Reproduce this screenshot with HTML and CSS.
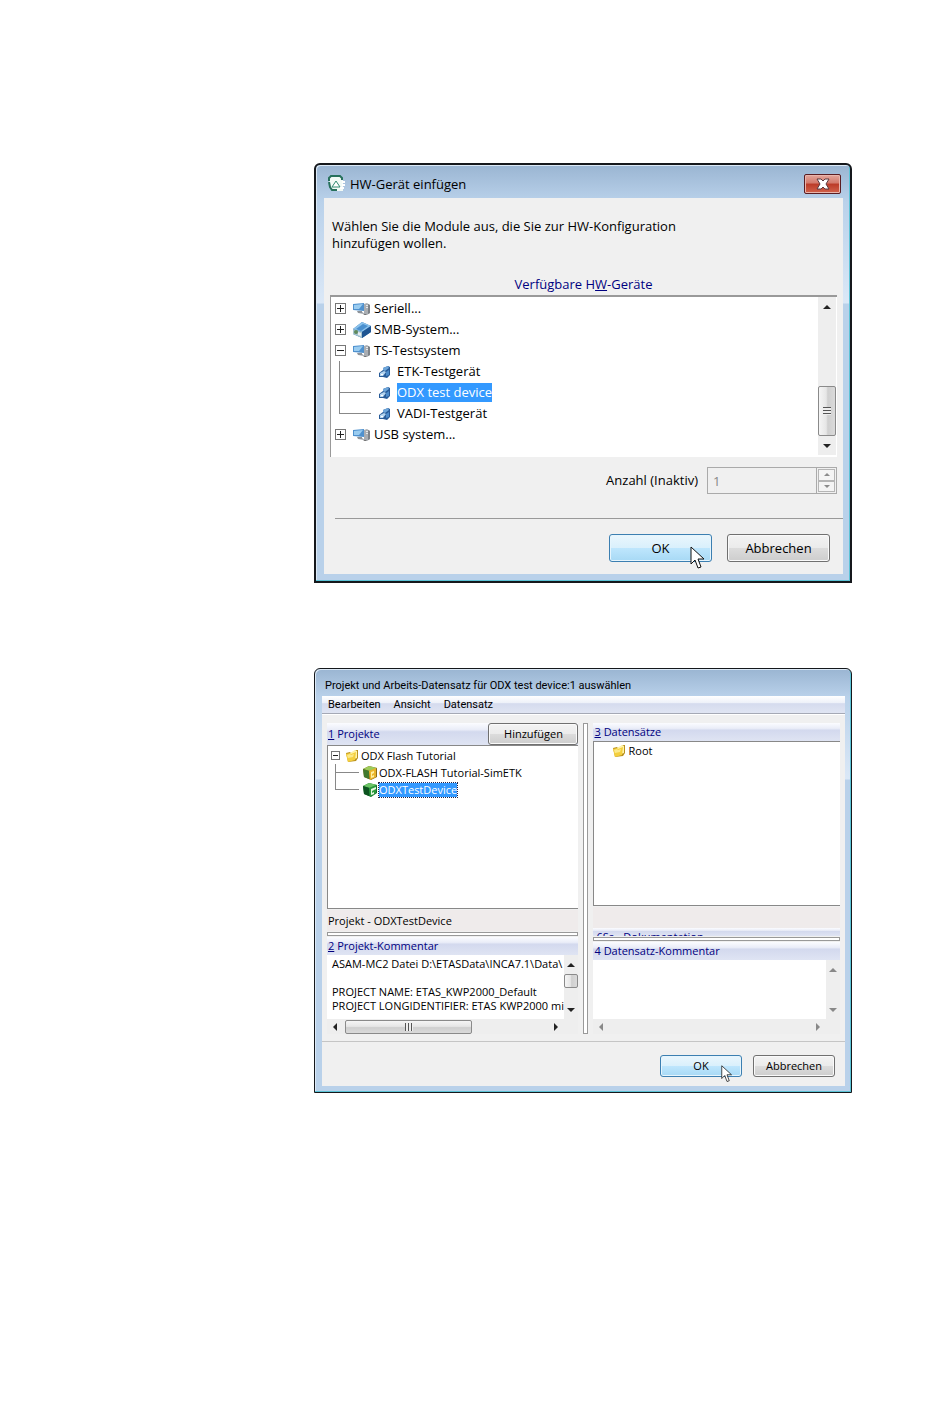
FILE: index.html
```html
<!DOCTYPE html>
<html lang="de">
<head>
  <meta charset="UTF-8">
  <meta name="viewport" content="width=device-width, initial-scale=1.0">
  <title>HW-Gerät einfügen</title>
  <link rel="stylesheet" href="styles.css">
</head>
<body>
  <!-- shared icons -->
  <svg class="sprite" aria-hidden="true">
    <symbol id="pc" viewBox="0 0 20 18">
      <path d="M12 4l3-1 3 2v8l-3 2-3-1z" fill="#a9adb2"/>
      <path d="M16 4l2 1v8l-2 1z" fill="#7d8288"/>
      <path d="M14 5h2v1h-2zM14 7h2v1h-2z" fill="#e4e7ea"/>
      <path d="M1 4l11-1v8L1 10z" fill="#4f91ce"/>
      <path d="M2 5l9-1-4 5-5 0z" fill="#9accf0"/>
      <path d="M5 11h5v1l3 2-7-1z" fill="#8d939a"/>
      <path d="M11 14l4 0-2 1z" fill="#555"/>
    </symbol>
    <symbol id="smb" viewBox="0 0 20 18">
      <path d="M1 8L10 1l9 4v6l-9 6-9-4z" fill="#2e6fb0"/>
      <path d="M1 8L10 1l9 4-9 6z" fill="#8cc3ec"/>
      <path d="M4 8l7-5 5 2-7 5z" fill="#4a90cf"/>
      <path d="M1 8l9 3v6l-9-4z" fill="#a6c4cf"/>
      <path d="M10 11l9-6v6l-9 6z" fill="#1f5592"/>
      <circle cx="4" cy="11" r="2" fill="#5f8a5c"/>
      <path d="M6 11l3 1v3l-3-1z" fill="#e8eef2"/>
    </symbol>
    <symbol id="device" viewBox="0 0 14 14">
      <path d="M1 8l4-3V3l5-2 2 1v8l-3 3-4-1H1z" fill="#285b98"/>
      <path d="M5 5V3l5-2 1 2-4 3z" fill="#6ea6da"/>
      <path d="M2 8l4-2 2 1-3 4H2z" fill="#b5d5f0"/>
      <path d="M8 7l3-2v5l-3 1z" fill="#4d8bc9"/>
      <path d="M3 9h2v1H3z" fill="#fff"/>
    </symbol>
    <symbol id="folder" viewBox="0 0 14 14">
      <path d="M1 4l4-1 1 1 5-3h2v8l-2 3-8 1z" fill="#b8901c"/>
      <path d="M5 4l5-3 2 1v7l-6 2z" fill="#fff3a8"/>
      <path d="M1 5l4-1 1 1 5-2-1 8-7 2z" fill="#f4cf3e"/>
      <path d="M2 6l3-1 1 1 3-1-1 3-5 1z" fill="#fbe98a"/>
    </symbol>
    <symbol id="box" viewBox="0 0 14 14">
      <path d="M0 3l6-3 8 2v9l-6 3-7-3z" fill="#8a6a18"/>
      <path d="M0 3l6-3 8 2-7 3z" fill="#9ccb5b"/>
      <path d="M0 3l6 2v8l-5-2z" fill="#41792d"/>
      <path d="M6 5l7-3v9l-6 3z" fill="#eab52a"/>
      <path d="M8 6l3-1v2l-2 1v2l2-1v2l-3 1z" fill="#fff0a0"/>
    </symbol>
    <symbol id="box-green" viewBox="0 0 14 14">
      <path d="M0 3l6-3 8 2v8l-6 4-7-3z" fill="#16702a"/>
      <path d="M0 3l6-3 8 2-7 3z" fill="#6cc465"/>
      <path d="M0 3l6 2v8l-5-2z" fill="#0d5320"/>
      <path d="M6 5l7-3v8l-6 4z" fill="#2b9a3d"/>
      <path d="M8 6l5-2v2L9 8v2l2-1v2l-3 1z" fill="#e6f7de"/>
    </symbol>
    <symbol id="cursor" viewBox="0 0 16 24">
      <path d="M1 1v17l4-4 3 8 3-1-3-8h6z" fill="#fff" stroke="#111"/>
    </symbol>
  </svg>

  <main class="page">
    <section class="dialog device-dialog" aria-labelledby="device-title">
      <header class="titlebar">
        <svg class="app-icon" viewBox="0 0 20 18" aria-hidden="true">
          <path d="M3 1h12l2 3v12H6L3 12z" fill="#f2faf6"/>
          <path d="M3 6V3l2-2h9l2 2v2M3 7l1 5 2 3h5" fill="none" stroke="#26705c" stroke-width="2"/>
          <path d="M10 6l4 6H6z" fill="#fff" stroke="#2f8a70"/>
          <path d="M16 7h3M16 10h3M14 13h4" stroke="#fff" stroke-width="2"/>
        </svg>
        <h1 id="device-title">HW-Gerät einfügen</h1>
        <button class="close" type="button" aria-label="Schließen">
          <svg viewBox="0 0 14 12" aria-hidden="true">
            <path d="M1 1h4l2 2 2-2h4L10 6l3 5H9L7 9l-2 2H1l3-5z" fill="#fff" stroke="#5b3a40"/>
          </svg>
        </button>
      </header>

      <div class="body">
        <p class="intro">Wählen Sie die Module aus, die Sie zur HW-Konfiguration<br>hinzufügen wollen.</p>
        <h2 class="list-title">Verfügbare H<u>W</u>-Geräte</h2>

        <div class="device-list">
          <ul class="tree">
            <li class="row"><span class="toggle plus"></span><svg class="icon"><use href="#pc"/></svg><span>Seriell...</span></li>
            <li class="row"><span class="toggle plus"></span><svg class="icon"><use href="#smb"/></svg><span>SMB-System...</span></li>
            <li class="row"><span class="toggle"></span><svg class="icon"><use href="#pc"/></svg><span>TS-Testsystem</span></li>
            <li>
              <ul class="children">
                <li class="row"><span class="branch"></span><svg class="icon"><use href="#device"/></svg><span>ETK-Testgerät</span></li>
                <li class="row"><span class="branch"></span><svg class="icon"><use href="#device"/></svg><span class="selected">ODX test device</span></li>
                <li class="row"><span class="branch"></span><svg class="icon"><use href="#device"/></svg><span>VADI-Testgerät</span></li>
              </ul>
            </li>
            <li class="row"><span class="toggle plus"></span><svg class="icon"><use href="#pc"/></svg><span>USB system...</span></li>
          </ul>
          <div class="scrollbar" aria-hidden="true">
            <span class="arrow up"></span>
            <span class="thumb"><i class="grip"></i></span>
            <span class="arrow down"></span>
          </div>
        </div>

        <div class="count">
          <label for="count">Anzahl (Inaktiv)</label>
          <input id="count" type="text" value="1" disabled>
          <div class="spinner">
            <button type="button" aria-label="Mehr" disabled><span class="arrow up"></span></button>
            <button type="button" aria-label="Weniger" disabled><span class="arrow down"></span></button>
          </div>
        </div>

        <footer class="actions">
          <div class="default-action">
            <button class="button primary" type="button">OK</button>
            <svg class="cursor" aria-hidden="true"><use href="#cursor"/></svg>
          </div>
          <button class="button" type="button">Abbrechen</button>
        </footer>
      </div>
    </section>

    <section class="dialog project-dialog" aria-labelledby="project-title">
      <header class="titlebar">
        <h1 id="project-title">Projekt und Arbeits-Datensatz für ODX test device:1 auswählen</h1>
      </header>

      <div class="body">
        <nav class="menu">
          <button type="button">Bearbeiten</button>
          <button type="button">Ansicht</button>
          <button type="button">Datensatz</button>
        </nav>

        <div class="panes">
          <div class="pane">
            <div class="pane-head with-button">
              <h2><u>1</u> Projekte</h2>
              <button class="button" type="button">Hinzufügen</button>
            </div>
            <ul class="tree projects">
              <li class="row"><span class="toggle"></span><svg class="icon"><use href="#folder"/></svg><span>ODX Flash Tutorial</span></li>
              <li>
                <ul class="children">
                  <li class="row"><span class="branch"></span><svg class="icon"><use href="#box"/></svg><span>ODX-FLASH Tutorial-SimETK</span></li>
                  <li class="row"><span class="branch"></span><svg class="icon"><use href="#box-green"/></svg><span class="selected">ODXTestDevice</span></li>
                </ul>
              </li>
            </ul>
            <p class="status">Projekt - ODXTestDevice</p>
            <div class="splitter"></div>
            <div class="pane-head"><label for="project-comment"><u>2</u> Projekt-Kommentar</label></div>
            <div class="comment">
              <textarea id="project-comment" wrap="off" readonly>ASAM-MC2 Datei D:\ETASData\INCA7.1\Data\

PROJECT NAME: ETAS_KWP2000_Default
PROJECT LONGIDENTIFIER: ETAS KWP2000 mi</textarea>
              <div class="scrollbar" aria-hidden="true">
                <span class="arrow up"></span>
                <span class="thumb"></span>
                <span class="arrow down"></span>
              </div>
              <div class="scrollbar horizontal" aria-hidden="true">
                <span class="arrow left"></span>
                <span class="thumb"><i class="grip"></i></span>
                <span class="arrow right"></span>
              </div>
            </div>
          </div>

          <div class="splitter vertical"></div>

          <div class="pane">
            <div class="pane-head"><h2><u>3</u> Datensätze</h2></div>
            <ul class="tree datasets">
              <li class="row"><svg class="icon"><use href="#folder"/></svg><span>Root</span></li>
            </ul>
            <p class="status"></p>
            <!-- pane pushed together by the splitter, only the top of its title shows -->
            <div class="pane-head collapsed"><h2>6Ss - Dokumentation</h2></div>
            <div class="splitter"></div>
            <div class="pane-head"><label for="dataset-comment">4 Datensatz-Kommentar</label></div>
            <div class="comment disabled">
              <textarea id="dataset-comment" readonly></textarea>
              <div class="scrollbar" aria-hidden="true">
                <span class="arrow up"></span>
                <span class="arrow down"></span>
              </div>
              <div class="scrollbar horizontal" aria-hidden="true">
                <span class="arrow left"></span>
                <span class="arrow right"></span>
              </div>
            </div>
          </div>
        </div>

        <footer class="actions">
          <div class="default-action">
            <button class="button primary" type="button">OK</button>
            <svg class="cursor" aria-hidden="true"><use href="#cursor"/></svg>
          </div>
          <button class="button" type="button">Abbrechen</button>
        </footer>
      </div>
    </section>
  </main>
</body>
</html>
```
FILE: styles.css
```css
:root {
  --frame: #b9d1ea;
  --face: #f0f0f0;
  --navy: #000080;
  --select: #3399ff;
}

* {
  margin: 0;
  padding: 0;
  box-sizing: border-box;
}

body {
  background: #fff;
  color: #000;
  font-family: "Open Sans", "Noto Sans", sans-serif;
  font-size: 13px;
  line-height: 17px;
}

h1,
h2 {
  font-size: inherit;
  font-weight: normal;
}

ul {
  list-style: none;
}

button,
input,
textarea {
  font: inherit;
  color: inherit;
}

.sprite {
  display: none;
}

.page {
  display: flex;
  flex-direction: column;
  gap: 85px;
  padding: 163px 98px 80px 314px;
}

/* window frame */
.dialog {
  border: 2px solid #15181c;
  border-radius: 6px 6px 0 0;
  padding: 0 7px 7px 8px;
  background: linear-gradient(#9ab5d2, var(--frame) 36px, #dbe8f7 138px, var(--frame) 139px);
  box-shadow: inset -1px -1px #5cc3d6, inset 1px 1px #dce9f6;
}

.titlebar {
  display: flex;
  align-items: center;
  height: 33px;
  padding-top: 5px;
}

.app-icon {
  width: 20px;
  height: 18px;
  margin: 0 4px 0 2px;
}

.close {
  display: flex;
  align-items: center;
  justify-content: center;
  width: 37px;
  height: 20px;
  margin: 0 2px 0 auto;
  border: 1px solid #5a1d22;
  border-radius: 2px;
  background: linear-gradient(#e3a69c, #d3796b 45%, #bb3b28 50%, #d2634c);
  box-shadow: inset 0 0 0 1px #e9b5ac;
}

.close svg {
  width: 14px;
  height: 12px;
}

.body {
  background: var(--face);
}

/* buttons */
.button {
  border: 1px solid #707070;
  border-radius: 3px;
  background: linear-gradient(#f3f3f3, #ebebeb 50%, #dcdcdc 51%, #cdcdcd);
  box-shadow: inset 0 0 0 1px #fafafa;
}

.button.primary {
  border-color: #3c7fb1;
  background: linear-gradient(#eaf6fd, #d9f0fc 50%, #bee6fd 51%, #a7d9f5);
  box-shadow: inset 0 0 0 1px #e6f5fd;
}

.actions {
  display: flex;
  justify-content: flex-end;
}

.actions .button {
  width: 103px;
  height: 28px;
}

.default-action {
  position: relative;
}

.cursor {
  position: absolute;
  top: 12px;
  left: 81px;
  width: 16px;
  height: 24px;
}

/* tree */
.tree {
  flex: 1;
  min-width: 0;
}

.row {
  display: flex;
  align-items: center;
  height: 21px;
  white-space: nowrap;
}

.toggle {
  flex: none;
  width: 11px;
  height: 11px;
  margin-right: 6px;
  border: 1px solid #777;
  background: linear-gradient(#222, #222) center / 7px 1px no-repeat #fff;
}

.toggle.plus {
  background: linear-gradient(#222, #222) center / 7px 1px no-repeat,
    linear-gradient(#222, #222) center / 1px 7px no-repeat #fff;
}

.icon {
  flex: none;
  width: 20px;
  height: 18px;
  margin-right: 2px;
}

.branch {
  flex: none;
  align-self: stretch;
  width: 32px;
  margin-right: 7px;
  background: linear-gradient(#888, #888) 0 50% / 100% 1px no-repeat,
    linear-gradient(#888, #888) 0 0 / 1px 100% no-repeat;
}

.row:last-child .branch {
  background-size: 100% 1px, 1px 50%;
}

.children {
  padding-left: 4px;
}

.children .icon {
  width: 14px;
  height: 14px;
  margin-right: 5px;
}

.selected {
  padding: 1px 0;
  background: var(--select);
  color: #fff;
}

/* scrollbars */
.scrollbar {
  display: flex;
  flex-direction: column;
  align-items: center;
  justify-content: space-between;
  flex: none;
  width: 18px;
  padding: 8px 0 7px;
  background: #eee;
}

.scrollbar.horizontal {
  flex-direction: row;
  width: auto;
  height: 15px;
  padding: 0 6px;
}

.arrow {
  flex: none;
  border: 4px solid transparent;
}

.arrow.up {
  border-top: 0;
  border-bottom-color: #222;
}

.arrow.down {
  border-bottom: 0;
  border-top-color: #222;
}

.arrow.left {
  border-left: 0;
  border-right-color: #222;
}

.arrow.right {
  border-right: 0;
  border-left-color: #222;
}

.thumb {
  display: flex;
  align-items: center;
  justify-content: center;
  width: 100%;
  border: 1px solid #8a8a8a;
  border-radius: 2px;
  background: linear-gradient(90deg, #f5f5f5, #e6e6e6 45%, #cfcfcf 55%, #dadada);
}

.grip {
  width: 8px;
  height: 8px;
  background: repeating-linear-gradient(#555 0 1px, #eee 1px 3px);
}

.horizontal .thumb {
  background: linear-gradient(#f5f5f5, #e6e6e6 45%, #cfcfcf 55%, #dadada);
}

.horizontal .grip {
  background: repeating-linear-gradient(90deg, #555 0 1px, #eee 1px 3px);
}

/* device dialog */
.device-dialog .body {
  padding: 20px 0 12px 6px;
}

.intro {
  padding-left: 2px;
}

.list-title {
  margin: 24px 6px 2px 0;
  color: var(--navy);
  text-align: center;
}

.device-list {
  display: flex;
  margin-right: 6px;
  border-top: 2px solid #999;
  border-left: 1px solid #999;
  background: #fff;
}

.device-list .tree {
  padding: 1px 0 12px 4px;
}

.device-list .scrollbar {
  margin: 0 1px 2px 0;
}

.device-list .thumb {
  height: 50px;
  margin: auto 0 8px;
}

.count {
  display: flex;
  align-items: center;
  justify-content: flex-end;
  margin: 10px 6px 24px 0;
}

.count input {
  width: 110px;
  height: 27px;
  margin-left: 9px;
  padding: 0 5px;
  border: 1px solid #aaa;
  background: var(--face);
  color: #888;
}

.spinner {
  display: flex;
  flex-direction: column;
  width: 20px;
  height: 27px;
  padding: 1px;
  border: 1px solid #aaa;
  border-left: 0;
}

.spinner button {
  display: flex;
  flex: 1;
  align-items: center;
  justify-content: center;
  border: 1px solid #b5b5b5;
  background: #f4f4f4;
}

.spinner .arrow {
  border-width: 3px;
  opacity: 0.5;
}

.spinner .up {
  border-top: 0;
}

.spinner .down {
  border-bottom: 0;
}

.device-dialog .actions {
  gap: 15px;
  margin-left: 5px;
  padding: 15px 13px 0 0;
  border-top: 1px solid #999;
}

/* project dialog */
.project-dialog {
  border-width: 1px;
  padding: 0 6px 6px 7px;
  background: linear-gradient(#9ab5d2, var(--frame) 28px, #dbe8f7 110px, var(--frame) 111px);
  font-size: 11px;
  line-height: 14px;
}

.project-dialog .titlebar {
  height: 27px;
  padding: 7px 0 0 3px;
  font-family: Roboto, sans-serif;
}

.menu {
  display: flex;
  gap: 13px;
  height: 18px;
  padding-left: 6px;
  border-bottom: 1px solid #a5a9b5;
  background: linear-gradient(#fff, #eef1f9 40%, #d5dbee 45%, #e0e5f3);
  font-family: Roboto, sans-serif;
}

.menu button {
  border: 0;
  background: none;
}

.panes {
  display: grid;
  grid-template-columns: 252fr 5px 247fr;
  gap: 5px;
  padding: 8px 5px 7px;
  border-top: 1px solid #fff;
}

.pane {
  display: flex;
  flex-direction: column;
  min-width: 0;
}

.pane-head {
  display: flex;
  align-items: center;
  flex: none;
  height: 18px;
  padding-left: 1px;
  background: linear-gradient(#fbfcff, #eaedf8 30%, #d3d9ee 40%, #dfe4f3);
  color: var(--navy);
}

.with-button {
  height: 22px;
}

.pane-head .button {
  width: 90px;
  height: 22px;
  margin-left: auto;
  color: #000;
}

.collapsed {
  align-items: flex-start;
  height: 8px;
  padding: 2px 0 0 3px;
  overflow: hidden;
}

.project-dialog .tree {
  padding: 0 0 0 3px;
  border: 1px solid #888;
  border-right: 0;
  background: #fff;
}

.project-dialog .projects {
  flex: none;
  height: 164px;
  padding-top: 1px;
}

.project-dialog .datasets {
  padding-left: 18px;
}

.project-dialog .row {
  height: 17px;
}

.project-dialog .toggle {
  width: 9px;
  height: 9px;
  margin-right: 5px;
  background-size: 5px 1px;
}

.project-dialog .icon {
  width: 14px;
  height: 14px;
  margin-right: 2px;
}

.project-dialog .branch {
  width: 24px;
  margin-right: 4px;
}

.project-dialog .selected {
  padding: 0;
  outline: 1px dotted #224;
}

.status {
  height: 21px;
  margin-top: 1px;
  padding: 4px 1px;
  background: #efebeb;
}

.splitter {
  flex: none;
  height: 4px;
  margin: 1px 0;
  border: 1px solid #999;
  background: #fff;
}

.splitter.vertical {
  height: auto;
  margin: 0;
}

.comment {
  display: grid;
  grid-template-columns: 1fr 14px;
  grid-template-rows: 64px 15px;
  background: #eee;
}

.comment textarea {
  width: 100%;
  height: 100%;
  padding: 2px 5px;
  border: 0;
  background: #fff;
  resize: none;
  overflow: hidden;
}

.comment .scrollbar {
  width: 14px;
}

.comment .scrollbar.horizontal {
  width: auto;
}

.comment .thumb {
  height: 14px;
  margin-bottom: 14px;
}

.comment .horizontal .thumb {
  width: 127px;
  margin: 0 auto 0 8px;
}

.comment.disabled {
  grid-template-rows: 59px 15px;
}

.disabled .arrow {
  opacity: 0.5;
}

.project-dialog .actions {
  gap: 11px;
  padding: 13px 10px 9px;
  border-top: 1px solid #c5c5c5;
}

.project-dialog .actions .button {
  width: 82px;
  height: 22px;
}

.project-dialog .cursor {
  top: 10px;
  left: 61px;
  width: 12px;
  height: 18px;
}
```
